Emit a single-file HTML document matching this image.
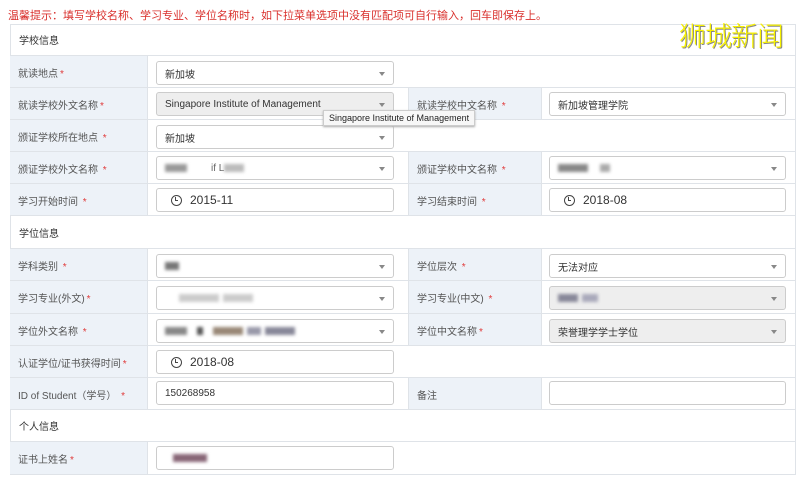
<!DOCTYPE html>
<html><head><meta charset="utf-8"><style>
*{box-sizing:border-box;margin:0;padding:0}
body{width:800px;height:480px;background:#fff;font-family:"Liberation Sans","Noto Sans CJK SC",sans-serif;font-size:10px;color:#444;position:relative;overflow:hidden}
.tip{position:absolute;left:8px;top:7px;color:#d9302c;font-size:11px}
.wm{position:absolute;left:679px;top:15px;font-size:27px;color:#f8f200;font-family:"Noto Sans CJK SC",sans-serif;font-weight:300;text-shadow:1px 1px 0 #888;letter-spacing:-1px}
.tbl{position:absolute;left:10px;top:24px;width:786px;height:451px;border:1px solid #dfe3e8;border-bottom:none}
.row{position:absolute;left:10px;width:786px;border-bottom:1px solid #dfe3e8}
.sec{padding-left:9px;display:flex;align-items:center;color:#333}
.lab{position:absolute;top:0;bottom:0;background:#edf2f8;display:block;line-height:14px;padding-top:12px;padding-left:8px;color:#555;border-right:1px solid #dfe3e8;white-space:nowrap}
.l1{left:0;width:138px}
.l2{left:398px;width:134px;border-left:1px solid #dfe3e8}
.s{color:#e03a3a;margin-left:2px}
.inp{position:absolute;height:24px;border:1px solid #ccc;border-radius:3px;background:#fff;display:flex;align-items:center;padding-left:8px;color:#333}
.i1{left:146px;width:238px}
.i2{left:539px;width:237px}
.dd::after{content:"";position:absolute;right:8px;top:10px;border:3px solid transparent;border-top:4px solid #888}
.gray{background:#eee}
.big{font-size:12px;padding-left:14px}
.clk{width:11px;height:11px;border:1.5px solid #444;border-radius:50%;margin-right:8px;position:relative}
.clk::after{content:"";position:absolute;left:3px;top:1px;width:2px;height:3px;border-left:1.3px solid #444;border-bottom:1.3px solid #444}
.bl{display:inline-block;height:8px;filter:blur(1.5px);margin-right:4px}
.tt{position:absolute;left:323px;top:110px;background:#f7f7f7;border:1px solid #ccc;font-size:9px;padding:2px 5px;color:#222;box-shadow:0 1px 2px #aaa}
</style></head><body>
<div class="tip">温馨提示：填写学校名称、学习专业、学位名称时，如下拉菜单选项中没有匹配项可自行输入，回车即保存上。</div>
<div class="tbl"></div>

<div class="row sec" style="top:24px;height:32px">学校信息</div>
<div class="row" style="top:56px;height:32px"><div class="lab l1">就读地点<span class="s">*</span></div><div class="inp i1 dd" style="top:5px">新加坡</div></div>
<div class="row" style="top:88px;height:32px"><div class="lab l1">就读学校外文名称<span class="s">*</span></div><div class="inp i1 dd gray" style="top:4px">Singapore Institute of Management</div><div class="lab l2">就读学校中文名称 <span class="s">*</span></div><div class="inp i2 dd" style="top:4px">新加坡管理学院</div></div>
<div class="row" style="top:120px;height:32px"><div class="lab l1">颁证学校所在地点 <span class="s">*</span></div><div class="inp i1 dd" style="top:5px">新加坡</div></div>
<div class="row" style="top:152px;height:32px"><div class="lab l1">颁证学校外文名称 <span class="s">*</span></div><div class="inp i1 dd" style="top:4px"><span class="bl" style="width:22px;background:#999"></span><span style="color:#666;margin-left:20px">if L</span><span class="bl" style="width:20px;background:#bbb"></span></div><div class="lab l2">颁证学校中文名称 <span class="s">*</span></div><div class="inp i2 dd" style="top:4px"><span class="bl" style="width:30px;background:#888"></span><span class="bl" style="width:10px;background:#aaa;margin-left:8px"></span></div></div>
<div class="row" style="top:184px;height:32px"><div class="lab l1">学习开始时间 <span class="s">*</span></div><div class="inp i1 big" style="top:4px"><span class="clk"></span>2015-11</div><div class="lab l2">学习结束时间 <span class="s">*</span></div><div class="inp i2 big" style="top:4px"><span class="clk"></span>2018-08</div></div>
<div class="row sec" style="top:216px;height:33px">学位信息</div>
<div class="row" style="top:249px;height:32px"><div class="lab l1">学科类别 <span class="s">*</span></div><div class="inp i1 dd" style="top:5px"><span class="bl" style="width:14px;background:#777"></span></div><div class="lab l2">学位层次 <span class="s">*</span></div><div class="inp i2 dd" style="top:5px">无法对应</div></div>
<div class="row" style="top:281px;height:33px"><div class="lab l1">学习专业(外文)<span class="s">*</span></div><div class="inp i1 dd" style="top:5px"><span class="bl" style="width:40px;background:#ccc;margin-left:14px"></span><span class="bl" style="width:30px;background:#ccc"></span></div><div class="lab l2">学习专业(中文) <span class="s">*</span></div><div class="inp i2 dd gray" style="top:5px"><span class="bl" style="width:20px;background:#889"></span><span class="bl" style="width:16px;background:#aab"></span></div></div>
<div class="row" style="top:314px;height:32px"><div class="lab l1">学位外文名称 <span class="s">*</span></div><div class="inp i1 dd" style="top:5px"><span class="bl" style="width:22px;background:#888"></span><span class="bl" style="width:6px;background:#555;margin-left:6px"></span><span class="bl" style="width:30px;background:#987;margin-left:6px"></span><span class="bl" style="width:14px;background:#99a"></span><span class="bl" style="width:30px;background:#889"></span></div><div class="lab l2">学位中文名称<span class="s">*</span></div><div class="inp i2 dd gray" style="top:5px">荣誉理学学士学位</div></div>
<div class="row" style="top:346px;height:32px"><div class="lab l1">认证学位/证书获得时间<span class="s">*</span></div><div class="inp i1 big" style="top:4px"><span class="clk"></span>2018-08</div></div>
<div class="row" style="top:378px;height:32px"><div class="lab l1">ID of Student（学号） <span class="s">*</span></div><div class="inp i1" style="top:3px">150268958</div><div class="lab l2">备注</div><div class="inp i2" style="top:3px"></div></div>
<div class="row sec" style="top:410px;height:32px">个人信息</div>
<div class="row" style="top:442px;height:33px"><div class="lab l1">证书上姓名<span class="s">*</span></div><div class="inp i1" style="top:4px"><span class="bl" style="width:34px;background:#867;margin-left:8px"></span></div></div>

<div class="tt">Singapore Institute of Management</div>
<div class="wm">狮城新闻</div>
</body></html>
